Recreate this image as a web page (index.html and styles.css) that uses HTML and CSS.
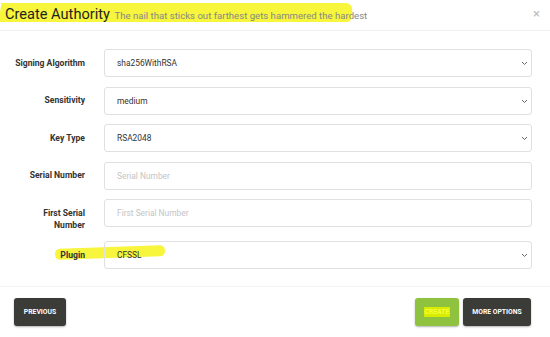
FILE: index.html
```html
<!DOCTYPE html>
<html>
<head>
<meta charset="utf-8">
<link rel="stylesheet" href="styles.css">
</head>
<body>
<div class="modal">
  <div class="header">
    <span class="hl-title"></span>
    <h1 class="title">Create Authority <small class="subtitle">The nail that sticks out farthest gets hammered the hardest</small></h1>
    <span class="close">×</span>
  </div>
  <div class="body">
    <div class="row">
      <label class="label">Signing Algorithm</label>
      <div class="control select"><span>sha256WithRSA</span><svg class="chev" width="7" height="5" viewBox="0 0 7 5"><path d="M1 1l2.5 2.5L6 1" fill="none" stroke="#666" stroke-width="1"/></svg></div>
    </div>
    <div class="row">
      <label class="label">Sensitivity</label>
      <div class="control select"><span>medium</span><svg class="chev" width="7" height="5" viewBox="0 0 7 5"><path d="M1 1l2.5 2.5L6 1" fill="none" stroke="#666" stroke-width="1"/></svg></div>
    </div>
    <div class="row">
      <label class="label">Key Type</label>
      <div class="control select"><span>RSA2048</span><svg class="chev" width="7" height="5" viewBox="0 0 7 5"><path d="M1 1l2.5 2.5L6 1" fill="none" stroke="#666" stroke-width="1"/></svg></div>
    </div>
    <div class="row">
      <label class="label">Serial Number</label>
      <div class="control"><span class="ph">Serial Number</span></div>
    </div>
    <div class="row">
      <label class="label">First Serial<br>Number</label>
      <div class="control"><span class="ph">First Serial Number</span></div>
    </div>
    <div class="row plugin">
      <span class="hl-plugin"></span>
      <label class="label">Plugin</label>
      <div class="control select"><span>CFSSL</span><svg class="chev" width="7" height="5" viewBox="0 0 7 5"><path d="M1 1l2.5 2.5L6 1" fill="none" stroke="#666" stroke-width="1"/></svg></div>
    </div>
  </div>
  <div class="footer">
    <button class="btn dark prev">PREVIOUS</button>
    <div class="spacer"></div>
    <button class="btn green"><span class="hl-text">CREATE</span></button>
    <button class="btn dark more">MORE OPTIONS</button>
  </div>
</div>
</body>
</html>
```

FILE: styles.css
```css
* { box-sizing: border-box; }
html, body { margin: 0; padding: 0; background: #fff; }
body { font-family: Roboto, "Liberation Sans", sans-serif; color: #333; width: 550px; height: 337px; overflow: hidden; }
.modal { width: 550px; }
.header { position: relative; height: 31px; border-bottom: 1px solid #f0f0f0; padding: 4px 0 0 5px; display: flex; align-items: flex-start; }
.hl-title { position: absolute; left: 0; top: 3px; width: 352px; height: 19px; background: #f7f53c; border-radius: 0 8px 4px 0; transform: skewX(-8deg); transform-origin: left; z-index: 0; }
.title { position: relative; z-index: 1; margin: 0; font-size: 14.6px; font-weight: 400; color: #1f1f1f; line-height: 20px; flex: 1; white-space: nowrap; }
.subtitle { font-size: 9.6px; color: #888; margin-left: 1px; }
.close { position: relative; z-index: 1; color: #bbb; font-size: 13px; line-height: 20px; margin-right: 10px; }
.body { padding: 18px 18px 17px 0; display: flex; flex-direction: column; gap: 9.5px; border-bottom: 1px solid #f2f2f2; }
.row { position: relative; display: grid; grid-template-columns: 85px 1fr; column-gap: 19px; align-items: start; }
.label { position: relative; z-index: 1; text-align: right; font-size: 8.6px; font-weight: 700; color: #333; line-height: 12.5px; padding-top: 7.5px; }
.control { position: relative; z-index: 1; height: 28px; border: 1px solid #e0e0e0; border-radius: 3px; display: flex; align-items: center; padding: 0 3px 0 12px; font-size: 8.4px; color: #333; background: transparent; }
.select { justify-content: space-between; }
.ph { color: #c4c4c4; }
.chev { margin-top: 1px; }
.hl-plugin { position: absolute; left: 55px; top: 6px; width: 110px; height: 11px; background: #f7f53c; border-radius: 5px; transform: rotate(-2deg); z-index: 0; }
.footer { display: flex; align-items: center; padding: 11px 19px 0 14px; gap: 4px; }
.spacer { flex: 1; }
.btn { height: 28px; border: none; border-radius: 3px; font-family: Roboto, "Liberation Sans", sans-serif; font-size: 6.8px; font-weight: 700; color: #fff; padding: 0; box-shadow: 0 1px 2px rgba(0,0,0,0.3); }
.btn.dark { background: #3b3b38; }
.btn.prev { width: 52px; }
.btn.green { background: #8fc33f; width: 44px; }
.btn.more { width: 68px; }
.hl-text { background: #d8ec00; color: #f5ff40; padding: 1px 1px; }
```
